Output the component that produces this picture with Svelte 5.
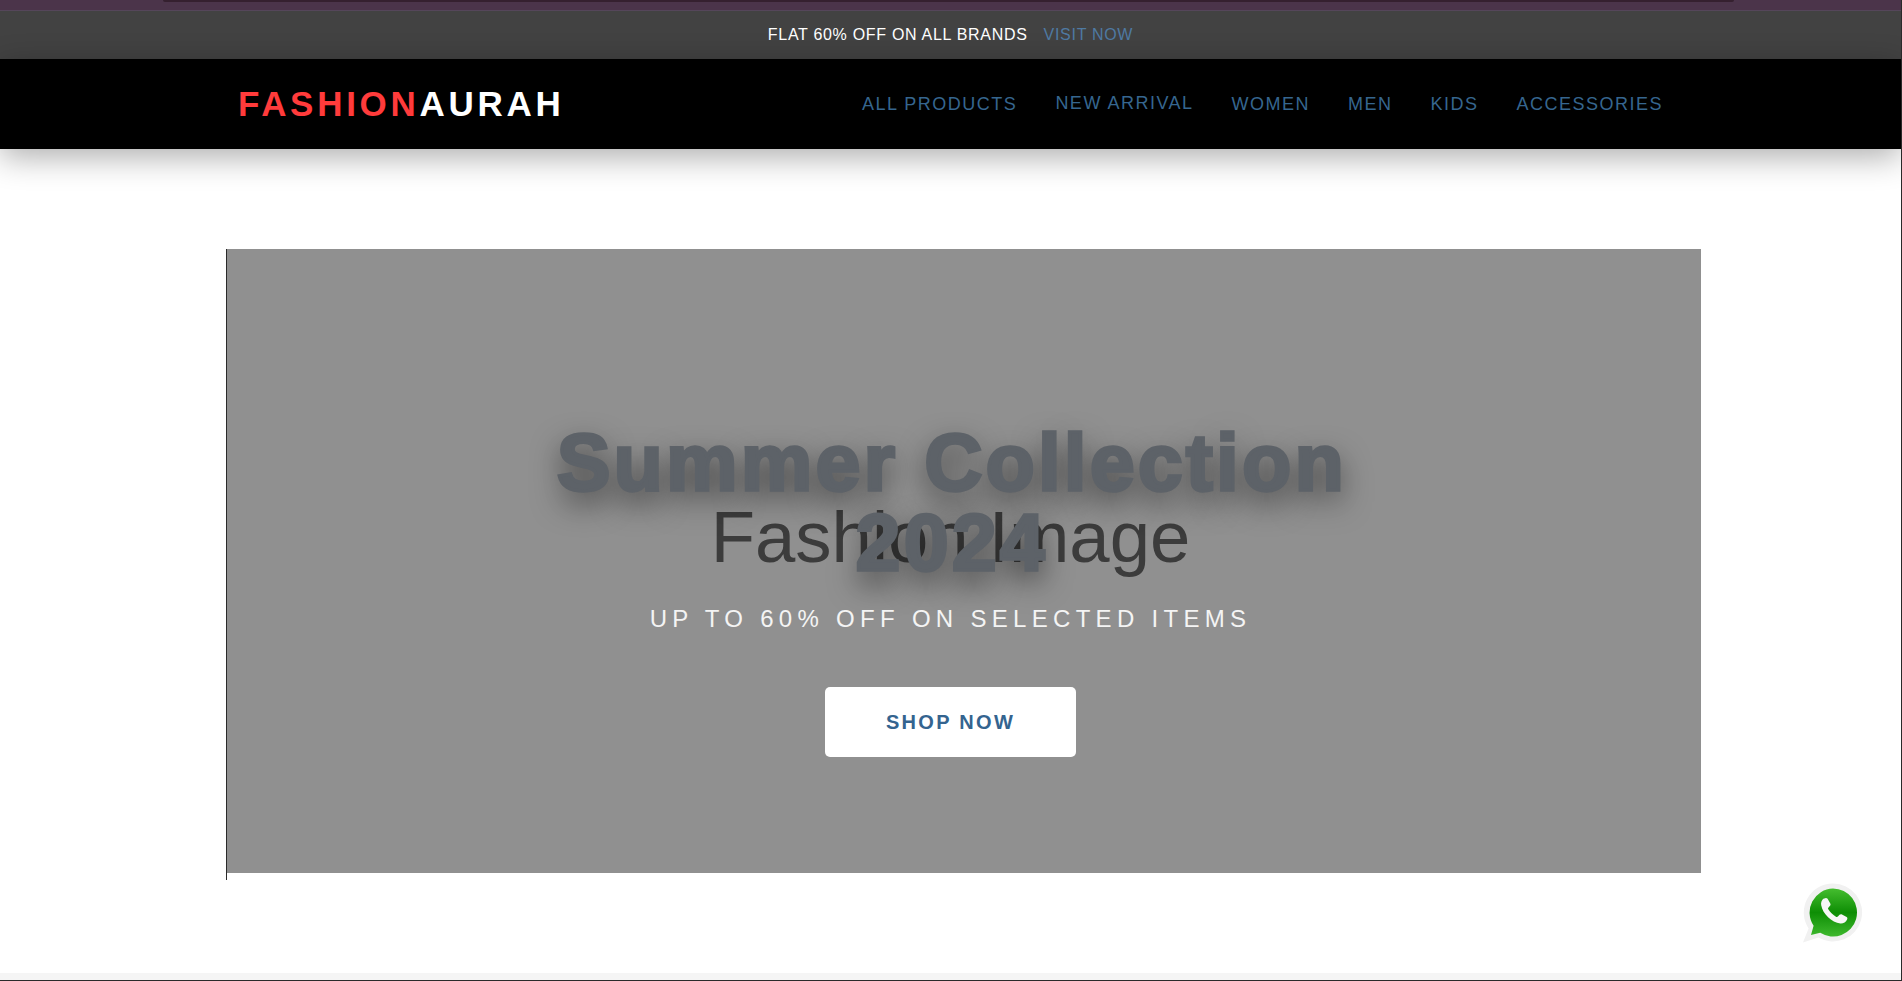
<script>
  const links = ['ALL PRODUCTS', 'NEW ARRIVAL', 'WOMEN', 'MEN', 'KIDS', 'ACCESSORIES'];
</script>

<div class="page">
  <div class="strip"><div class="strip-bar"></div></div>
  <div class="promo">
    <span class="promo-text">FLAT 60% OFF ON ALL BRANDS</span>
    <a class="promo-link" href="#top">VISIT NOW</a>
  </div>
  <header class="nav">
    <div class="logo"><span class="red">FASHION</span>AURAH</div>
    <nav class="links">
      {#each links as link}
        <a href="#top" class:raised={link === 'NEW ARRIVAL'}>{link}</a>
      {/each}
    </nav>
  </header>

  <main class="main">
    <section class="hero-wrap">
      <div class="hero">
        <div class="alt">Fashion Image</div>
        <div class="content">
          <h1>Summer Collection 2024</h1>
          <p>UP TO 60% OFF ON SELECTED ITEMS</p>
          <a class="cta" href="#top">SHOP NOW</a>
        </div>
      </div>
    </section>
  </main>
  <div class="foot"></div>

  <a class="wa" href="#top" aria-label="WhatsApp">
    <svg width="64" height="68" viewBox="0 0 64 68">
      <defs>
        <linearGradient id="wag" x1="0" y1="0" x2="0" y2="1">
          <stop offset="0" stop-color="#45bd2f" />
          <stop offset="0.5" stop-color="#0e8e05" />
          <stop offset="1" stop-color="#3fb92e" />
        </linearGradient>
      </defs>
      <path d="M33 3.5a29 29 0 1 1-14.6 54L3 62.5l5.6-14A29 29 0 0 1 33 3.5z" fill="#f1f1f1" />
      <path d="M33 8.5a24 24 0 1 1-12.8 44.3L11 55l2.6-9.2A24 24 0 0 1 33 8.5z" fill="url(#wag)" />
      <path d="M24.3 18.6c1-.7 2.5-.8 3.3.2l2.7 4.6c.5 1 .2 1.9-.5 2.7l-1.5 1.6c-.4.5-.4 1 0 1.6 2 3.3 4.6 5.8 8 7.6.6.3 1.1.2 1.6-.3l1.6-1.8c.7-.7 1.6-.8 2.5-.4l4.6 2.5c.9.6 1 1.5.5 2.6-1.2 2.7-3.8 4.2-6.7 4-8.8-1-17.6-9.4-19.2-18.2-.5-2.9.4-5 2.6-6.7z" fill="#f7f7f7" />
    </svg>
  </a>
</div>

<style>
  :global(body) {
    margin: 0;
    background: #fff;
  }
  .page {
    box-sizing: border-box;
    height: 981px;
    display: flex;
    flex-direction: column;
    overflow: hidden;
    border-right: 1px solid #2a2a2a;
    border-bottom: 1px solid #2a2a2a;
    font-family: "Liberation Sans", Arial, sans-serif;
    position: relative;
  }
  .strip {
    height: 11px;
    background: #4b344a;
    border-bottom: 1px solid #55465a;
    box-sizing: border-box;
    flex: none;
    margin-right: -1px;
  }
  .strip-bar {
    height: 2px;
    margin: 0 168px 0 163px;
    background: #35202f;
    border-radius: 0 0 4px 4px;
  }
  .promo {
    height: 48px;
    flex: none;
    background: #424242;
    display: flex;
    justify-content: center;
    align-items: center;
    gap: 16px;
    font-size: 16px;
    letter-spacing: 0.7px;
  }
  .promo-text {
    color: #fff;
  }
  .promo-link {
    color: #4f7aa2;
    text-decoration: none;
  }
  .nav {
    height: 90px;
    flex: none;
    background: #000;
    display: flex;
    align-items: center;
    padding-left: 238px;
    box-shadow: 0 8px 32px rgba(0, 0, 0, 0.32);
    position: relative;
    z-index: 2;
  }
  .logo {
    font-size: 35px;
    font-weight: 700;
    letter-spacing: 3.7px;
    color: #fff;
    width: 624px;
  }
  .red {
    color: #ff3b3b;
  }
  .links {
    display: flex;
    gap: 38px;
  }
  .links a {
    color: #36668f;
    text-decoration: none;
    font-size: 18px;
    letter-spacing: 1.5px;
  }
  .links a.raised {
    transform: translateY(-1px);
  }
  .main {
    flex: 1;
    padding: 100px 0 0 226px;
  }
  .hero-wrap {
    width: 1475px;
    height: 631px;
    box-sizing: border-box;
    border-left: 1px solid #2a2a2a;
  }
  .hero {
    height: 624px;
    background: #909090;
    display: grid;
    padding-right: 27px;
  }
  .alt,
  .content {
    grid-area: 1 / 1;
  }
  .alt {
    color: #3c3c3c;
    font-size: 72.5px;
    line-height: 80px;
    text-align: center;
    padding-top: 248px;
  }
  .content {
    display: flex;
    flex-direction: column;
    align-items: center;
    padding-top: 174px;
  }
  h1 {
    margin: 0 0 0 3px;
    width: 900px;
    text-align: center;
    font-size: 80px;
    line-height: 80px;
    font-weight: 900;
    letter-spacing: 3.6px;
    color: #5d6268;
    -webkit-text-stroke: 3.5px #5d6268;
    text-shadow: 0 12px 30px rgba(0, 0, 0, 0.65);
  }
  p {
    margin: 0;
    padding-top: 22px;
    color: #f4f4f4;
    font-size: 24px;
    letter-spacing: 5.3px;
  }
  .cta {
    margin-top: 54px;
    width: 251px;
    height: 70px;
    background: #fff;
    border-radius: 5px;
    display: flex;
    align-items: center;
    justify-content: center;
    color: #34648f;
    font-size: 20px;
    font-weight: 700;
    letter-spacing: 2.3px;
    text-decoration: none;
  }
  .foot {
    flex: none;
    height: 7px;
    background: #f5f5f5;
  }
  .wa {
    position: absolute;
    left: 1800px;
    top: 880px;
    line-height: 0;
  }
</style>
